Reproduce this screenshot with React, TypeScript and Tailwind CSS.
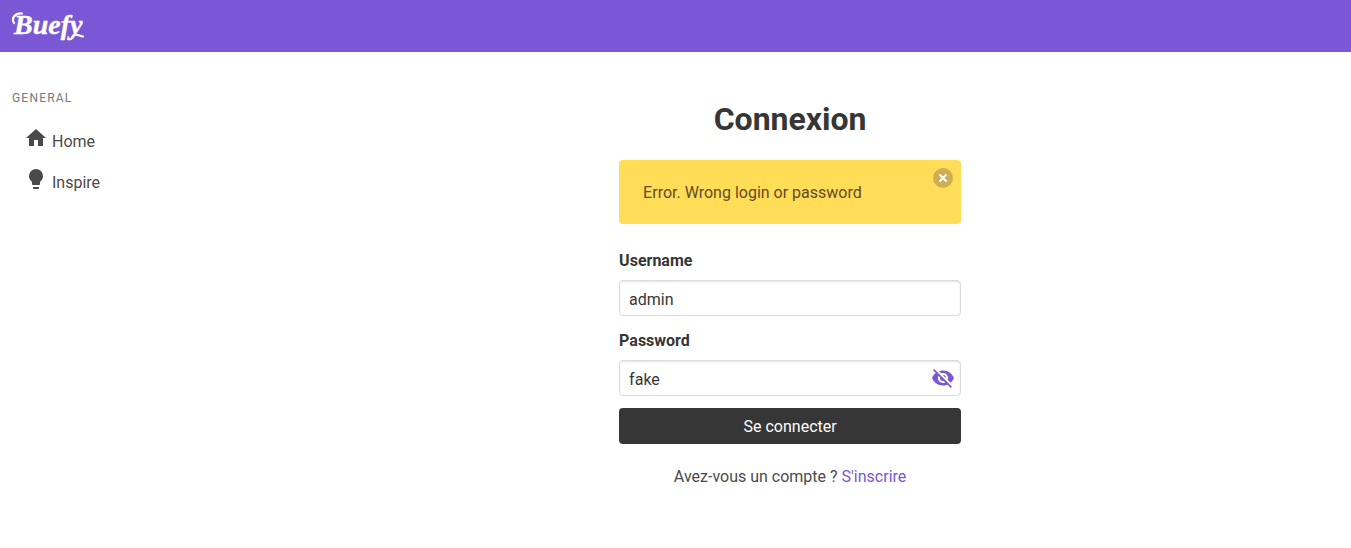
import { useState } from "react";

const icons = {
  home: "M10,20V14H14V20H19V12H22L12,3L2,12H5V20H10Z",
  lightbulb:
    "M12,2A7,7 0 0,0 5,9C5,11.38 6.19,13.47 8,14.74V17A1,1 0 0,0 9,18H15A1,1 0 0,0 16,17V14.74C17.81,13.47 19,11.38 19,9A7,7 0 0,0 12,2M9,21A1,1 0 0,0 10,22H14A1,1 0 0,0 15,21V20H9V21Z",
  eyeOff:
    "M11.83,9L15,12.16C15,12.11 15,12.05 15,12A3,3 0 0,0 12,9C11.94,9 11.89,9 11.83,9M7.53,9.8L9.08,11.35C9.03,11.56 9,11.77 9,12A3,3 0 0,0 12,15C12.22,15 12.44,14.97 12.65,14.92L14.2,16.45C13.53,16.78 12.79,17 12,17A5,5 0 0,1 7,12C7,11.21 7.2,10.47 7.53,9.8M2,4.27L4.28,6.55L4.73,7C3.08,8.3 1.78,10 1,12C2.73,16.39 7,19.5 12,19.5C13.55,19.5 15.03,19.2 16.38,18.66L16.81,19.08L19.73,22L21,20.73L3.27,3M12,7A5,5 0 0,1 17,12C17,12.64 16.87,13.26 16.64,13.82L19.57,16.75C21.07,15.5 22.27,13.86 23,12C21.27,7.61 17,4.5 12,4.5C10.6,4.5 9.26,4.75 8,5.2L10.17,7.35C10.74,7.13 11.35,7 12,7Z",
  eye: "M12,9A3,3 0 0,0 9,12A3,3 0 0,0 12,15A3,3 0 0,0 15,12A3,3 0 0,0 12,9M12,17A5,5 0 0,1 7,12A5,5 0 0,1 12,7A5,5 0 0,1 17,12A5,5 0 0,1 12,17M12,4.5C7,4.5 2.73,7.61 1,12C2.73,16.39 7,19.5 12,19.5C17,19.5 21.27,16.39 23,12C21.27,7.61 17,4.5 12,4.5Z",
};

function Icon({ name }: { name: keyof typeof icons }) {
  return (
    <svg viewBox="0 0 24 24" className="size-6 fill-current" aria-hidden="true">
      <path d={icons[name]} />
    </svg>
  );
}

function Logo() {
  return (
    <svg viewBox="0 0 74 36" className="h-9 w-[74px] overflow-visible" role="img" aria-label="Buefy">
      <text
        x="2"
        y="26"
        fill="#fff"
        stroke="#fff"
        strokeWidth="0.4"
        className="font-['Liberation_Serif',serif] text-[28px] font-bold italic"
      >
        Buefy
      </text>
      <path
        d="M2 15C-1 10 3 5 10 5.500M60 29C63 24.500 66 27.500 71 28.500"
        fill="none"
        stroke="#fff"
        strokeWidth="2.2"
        strokeLinecap="round"
      />
    </svg>
  );
}

function MenuItem({ icon, label }: { icon: keyof typeof icons; label: string }) {
  return (
    <li>
      <a href="#" className="flex items-end gap-1 px-3 pt-[7px] pb-1.5">
        <span className="pb-1">
          <Icon name={icon} />
        </span>
        {label}
      </a>
    </li>
  );
}

const labelClass = "mb-[7px] block font-bold text-[#363636]";

const inputClass =
  "block h-9 w-full rounded border border-[#dbdbdb] bg-white px-[9px] pt-0.5 text-[#363636] shadow-[inset_0_1px_2px_rgba(10,10,10,0.1)] outline-none focus:border-[#7957d5]";

export default function App() {
  const [username, setUsername] = useState("admin");
  const [password, setPassword] = useState("fake");
  const [visible, setVisible] = useState(true);
  const [error, setError] = useState(true);

  return (
    <div className="overflow-x-hidden bg-white font-['Roboto',sans-serif] text-base text-[#4a4a4a]">
      <header className="flex h-[52px] items-center bg-[#7957d5] px-3">
        <a href="#">
          <Logo />
        </a>
      </header>

      <div className="-mx-3 flex">
        <aside className="w-1/6 px-6 pt-9">
          <p className="mb-2.5 text-xs leading-[21px] tracking-widest text-[#7a7a7a] uppercase">
            General
          </p>
          <ul>
            <MenuItem icon="home" label="Home" />
            <MenuItem icon="lightbulb" label="Inspire" />
          </ul>
        </aside>

        <main className="flex-1 px-6 py-12">
          <div className="mx-auto w-1/3 px-3">
            <h1 className="mb-[22px] text-center text-[32px] leading-[38px] font-bold text-[#363636]">
              Connexion
            </h1>

            {error && (
              <div
                role="alert"
                className="relative mb-[25px] rounded bg-[#ffdd57] px-6 pt-[21px] pb-[19px] text-[#644a2a]"
              >
                Error. Wrong login or password
                <button
                  type="button"
                  aria-label="Close"
                  onClick={() => setError(false)}
                  className="absolute top-2 right-2 flex size-5 items-center justify-center rounded-full bg-[#ceae54] text-white"
                >
                  <svg viewBox="0 0 20 20" className="size-5" aria-hidden="true">
                    <path
                      d="M6.5 6.5L13.5 13.5M13.5 6.5L6.5 13.5"
                      stroke="currentColor"
                      strokeWidth="2"
                    />
                  </svg>
                </button>
              </div>
            )}

            <form onSubmit={(e) => e.preventDefault()}>
              <div className="mb-[13px]">
                <label htmlFor="username" className={labelClass}>
                  Username
                </label>
                <input
                  id="username"
                  type="text"
                  value={username}
                  onChange={(e) => setUsername(e.target.value)}
                  className={inputClass}
                />
              </div>

              <div className="mb-3">
                <label htmlFor="password" className={labelClass}>
                  Password
                </label>
                <div className="relative">
                  <input
                    id="password"
                    type={visible ? "text" : "password"}
                    value={password}
                    onChange={(e) => setPassword(e.target.value)}
                    className={inputClass}
                  />
                  <button
                    type="button"
                    aria-label="Toggle password visibility"
                    onClick={() => setVisible(!visible)}
                    className="absolute top-0 right-0 flex size-9 items-center justify-center text-[#7957d5]"
                  >
                    <Icon name={visible ? "eyeOff" : "eye"} />
                  </button>
                </div>
              </div>

              <button type="submit" className="h-9 w-full rounded bg-[#363636] pt-0.5 text-white">
                Se connecter
              </button>
            </form>

            <p className="mt-[21px] text-center">
              Avez-vous un compte ?{" "}
              <a href="#" className="text-[#7957d5]">
                S'inscrire
              </a>
            </p>
          </div>
        </main>
      </div>
    </div>
  );
}
